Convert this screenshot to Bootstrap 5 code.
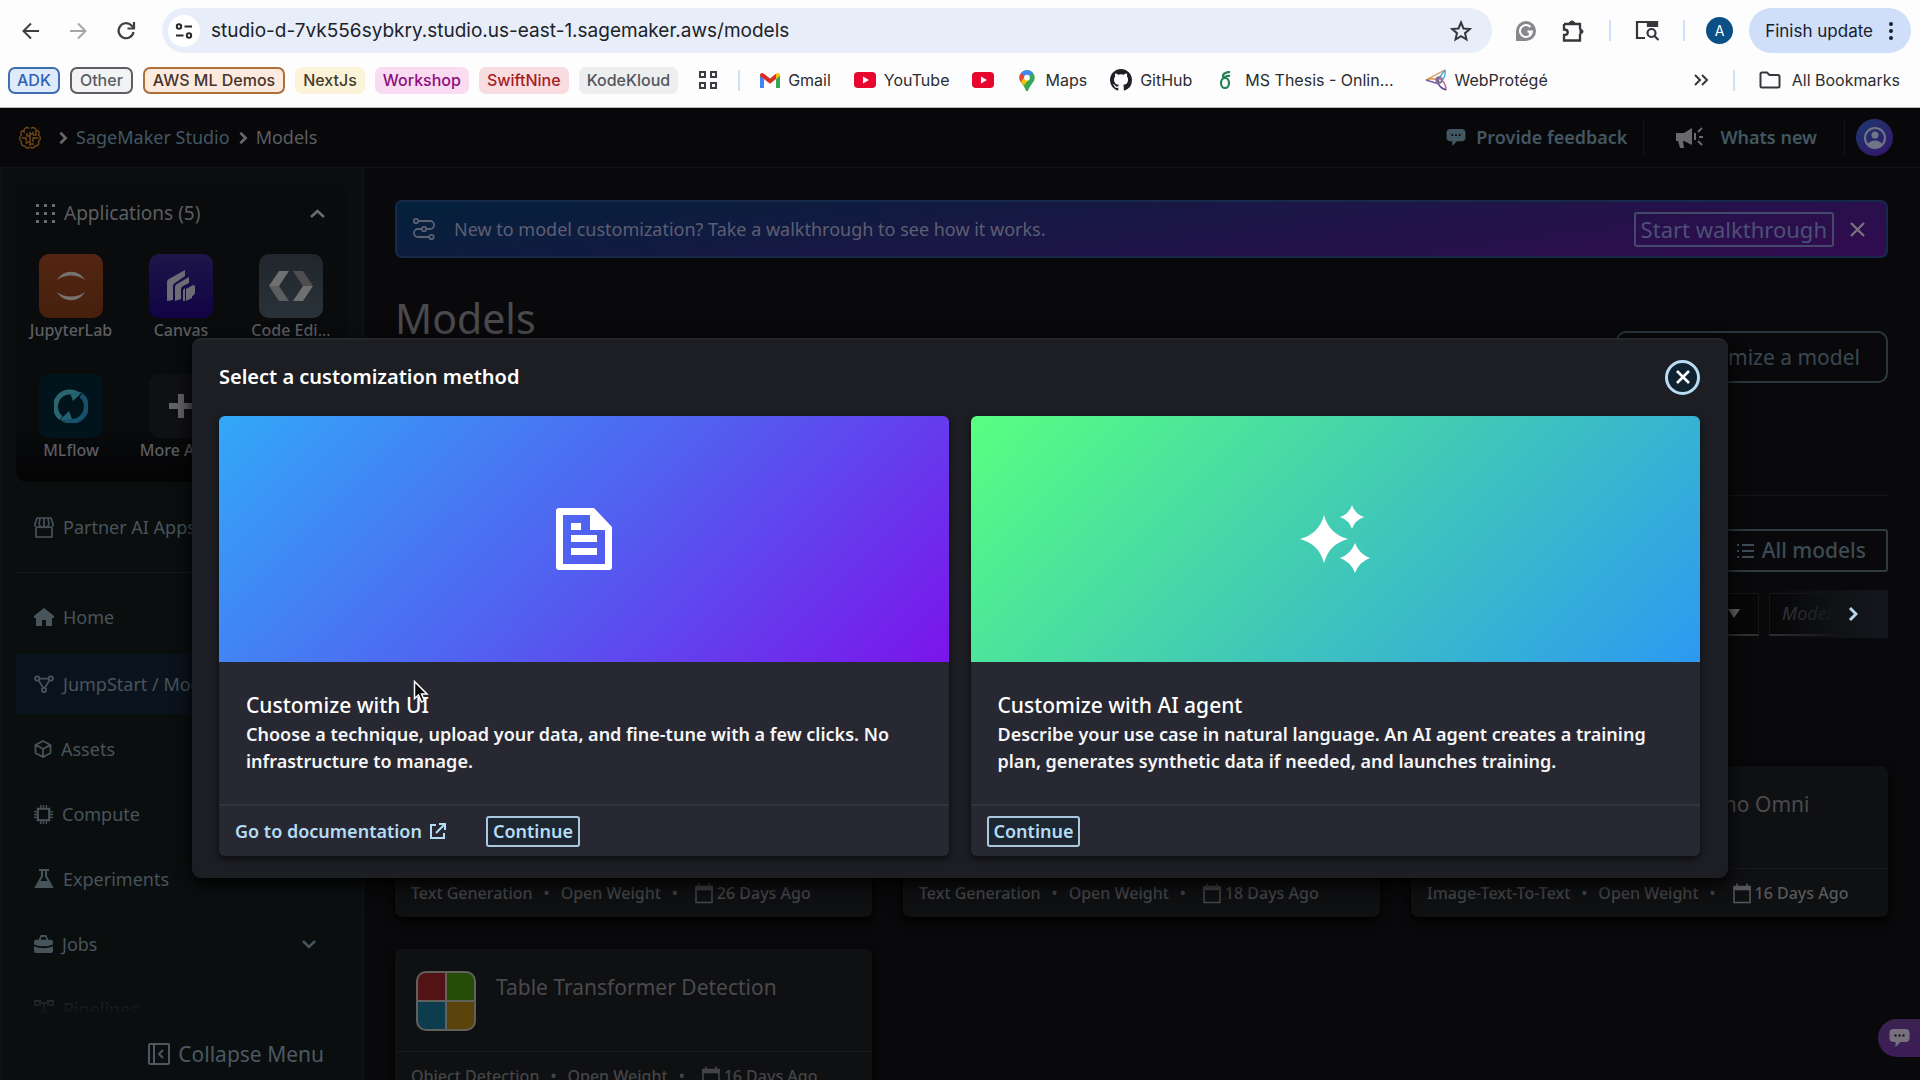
<!DOCTYPE html>
<html lang="en" data-bs-theme="dark">
<head>
<meta charset="utf-8">
<meta name="viewport" content="width=device-width, initial-scale=1">
<title>Models - SageMaker Studio</title>
<link href="https://cdn.jsdelivr.net/npm/bootstrap@5.3.0/dist/css/bootstrap.min.css" rel="stylesheet">
<style>
body{height:100vh;overflow:hidden;background:#09090b;color:#5c5d61;font-family:"Noto Sans",sans-serif;font-size:18px;line-height:27px;font-weight:400}
a{text-decoration:none;color:inherit}
svg{flex:none;display:block}
button{font-family:inherit}
.plain-btn{background:none;border:0;padding:0;color:inherit}

/* browser chrome */
.chrome{height:108px;background:#fdfdfe;color:#2b2d31;font-family:Inter,sans-serif;font-size:16px;line-height:22px;border-bottom:1px solid #b9bbbd}
.tool-row{height:61px;padding:0 9px 0 20px}
.nav-icons{gap:25px;margin-right:24px}
.omni{height:45px;border-radius:23px;background:#e8eef9;padding-left:6px;padding-right:20px}
.site-info{width:32px;height:32px;border-radius:50%;background:#fff}
.omni input{background:none;border:0;outline:0;font-size:19px;color:#202228;padding:0 0 0 11px}
.v-rule{width:2px;height:21px;background:#cfe0f8}
.acct{width:27px;height:27px;border-radius:50%;background:#0b4f87;color:#fff;font-size:14px}
.update-pill{height:45px;border-radius:23px;background:#cfdef9;color:#17202f;font-size:17px;padding:0 18px 0 16px;border:0}
.mark-row{height:38px;padding:0 20px 0 8px}
.mark-icon{margin:0 20px}
.chip{height:27px;border-radius:7px;padding:0 9px;font-weight:500;display:flex;align-items:center}
.chip-adk{background:#dfeafb;color:#2f61b4;border:2px solid #3f6fae;padding:0 7px}
.chip-other{background:#f1f3f4;color:#5b5e62;border:2px solid #5d5f62;padding:0 8px}
.chip-aws{background:#fbeadd;color:#47332a;border:2px solid #ad7038;padding:0 8px}
.chip-next{background:#fbf4d9;color:#443d2c;padding:0 8px}
.chip-work{background:#f9dcf2;color:#8e0d7d;padding:0 8px}
.chip-swift{background:#f9dcdf;color:#a51d26;padding:0 8px}
.chip-kode{background:#eceef0;color:#54575c;padding:0 8px}

/* application header */
.app-head{height:60px;border-bottom:1px solid #131417;background:#08080a;padding-left:18px;padding-right:27px}
.crumb-link{color:#425762}
.head-link{color:#425762;font-weight:600}
.head-rule{width:1px;height:38px;background:#131417}
.head-rule-end{margin:0 11px 0 27px}
.me{width:37px;height:37px;border-radius:50%;background:linear-gradient(145deg,#1e3a6e,#34146b)}

/* sidebar */
.side{width:364px;flex:none;background:#0b0e0f;border-right:1px solid #121517;border-left:2px solid #0f1314;padding:16px 15px 0 14px;color:#48545b}
.apps-card{height:298px;border-radius:10px;background:linear-gradient(#090b0d 80%,#040405);color:#5c5e61}
.apps-head{height:58px;padding:0 23px 0 20px}
.apps-head button{font-size:19px}
.tile-cell{width:110px;height:120px;font-size:16px;line-height:24px;text-align:center;font-weight:500}
.tile{width:64px;height:64px;border-radius:10px}
.t-jup{background:linear-gradient(#532513,#46200c)}
.t-can{background:linear-gradient(#1e1549,#110345)}
.t-code{background:linear-gradient(#20262b,#2a3239)}
.t-ml{background:#02141b}
.t-more{background:#0f1012}
.side-link{height:60px;padding-left:18px;gap:9px}
.side-link.active{background:#0a131d}
.side-line{height:1px;background:#17191b}
.fade-link{height:60px;opacity:.4;-webkit-mask-image:linear-gradient(#000 20px,transparent 36px);mask-image:linear-gradient(#000 20px,transparent 36px)}
.collapse-row{height:62px;padding:22px 24px 0 0;font-size:21px;line-height:28px;color:#4a5962;font-weight:500}

/* page */
.page{padding:32px 32px 0 31px;min-width:0}
.tour{height:58px;border:2px solid #16294a;border-radius:7px;background:linear-gradient(172deg,#03213a,#1b1646 50%,#320b50);padding:0 21px 0 15px;color:#5d5f72;font-size:18px}
.tour-btn{border:2px solid #45486b;border-radius:3px;background:none;color:#4b5274;font-size:22px;height:35px;line-height:30px;padding:0 5px}
.page-title{font-size:41px;line-height:52px;color:#4a4a4d;font-weight:400}
.cust-btn{width:272px;height:52px;border:2px solid #2b373d;border-radius:10px;background:none;color:#394850;font-size:21px;padding:0 26px}
.all-btn{height:43px;border:2px solid #2f3a40;border-radius:3px;background:none;color:#3c4b54;font-size:21px;font-weight:500;padding:0 20px}
.page-line{height:1px;background:#141517}
.filter{width:200px;height:43px;background:#070708;border:1px solid #151618;border-bottom:2px solid #2f3032;font-style:italic;color:#3d3d40;padding-left:12px;appearance:none}
.filter-end{width:119px;height:48px}
.filter-end .filter{width:119px}
.scroll-cover{inset:0;background:linear-gradient(90deg,rgba(16,17,21,0),#101216 60%,#14171d);padding-right:28px}
.model-grid{--bs-gutter-x:31px;--bs-gutter-y:32px}
.model-card{background:#0f1012;border-radius:7px;box-shadow:0 4px 10px #000}
.model-top{height:102px;padding:22px 21px 0 21px;gap:20px}
.model-top h2{font-size:21px;line-height:32px;color:#4a4a4d;font-weight:400;margin:0}
.logo-box{width:60px;height:60px;border-radius:10px;background:#5f5f5b}
.model-foot{height:49px;border-top:1px solid #191a1c;padding:0 16px;font-size:16px;font-weight:500;color:#454547;gap:11px}
.model-foot .newer{color:#58585b}
.model-foot .aged{gap:3px;margin-left:5px}

/* dialog */
.dlg{left:10%;right:10%;top:230px;background:#1d1e23;border-top:2px solid #26272d;border-radius:9px;padding:18px 28px 22px 27px;color:#f6f6f8;box-shadow:0 6px 18px #000;z-index:5}
.dlg-head{height:38px;margin-bottom:20px}
.dlg h1{font-size:20px;line-height:32px;font-weight:600;margin:0}
.dlg-close{width:35px;height:35px;border-radius:50%;border:3px solid #b8dcf3;background:#10222f;color:#fff;padding:0}
.way-row{gap:22px}
.way{flex:1 1 0;background:#272831;border-radius:6px;overflow:hidden;box-shadow:0 3px 6px #0b0c0f}
.way-art{height:246px}
.art-blue{background:linear-gradient(135deg,#32a8f8,#5161f0 50%,#7b14ea)}
.art-green{background:linear-gradient(135deg,#58ff80,#41cbb4 50%,#2c99f2)}
.way-text{height:142px;padding:27px 27px 0;font-weight:600}
.way-text h2{font-size:21px;line-height:32px;font-weight:500;margin:0}
.way-text p{margin:0}
.way-foot{height:52px;border-top:2px solid #33353d;padding:0 16px;gap:40px;color:#b3dcf5;font-weight:600}
.go-btn{height:31px;border:2px solid #a9c9de;border-radius:3px;background:#1d2631;color:#b3dcf5;font-weight:600;padding:0 5px;line-height:26px}
.pointer{left:413px;top:572px;z-index:6}
.chat-tab{right:0;bottom:23px;width:42px;height:38px;border-radius:19px 0 0 19px;background:linear-gradient(#3a2250,#3d1d58);border:0;padding:0 0 0 11px;color:#77707e}
</style>
<script src="https://cdn.jsdelivr.net/npm/bootstrap@5.3.0/dist/js/bootstrap.bundle.min.js"></script>
</head>
<body class="d-flex flex-column">

<svg width="0" height="0" class="position-absolute">
  <symbol id="i-cal" viewBox="0 0 20 20"><path d="M2 4h16v15H2z" fill="none" stroke="currentColor" stroke-width="1.500"/><path d="M2 3h16v3H2zM5 0v4M15 0v4" fill="currentColor" stroke="currentColor" stroke-width="1.500"/></symbol>
  <symbol id="i-chat" viewBox="0 0 20 18"><path d="M4 0h12a4 4 0 0 1 4 4v5a4 4 0 0 1-4 4h-5l-5 5v-5H4a4 4 0 0 1-4-4V4a4 4 0 0 1 4-4z" fill="currentColor"/><path d="M5 6.500h2M9 6.500h2M13 6.500h2" stroke="#0a0a0c" stroke-width="2"/></symbol>
  <symbol id="i-yt" viewBox="0 0 22 16"><rect width="22" height="16" rx="4" fill="#e6062e"/><path d="M9 4.500v7l6-3.500z" fill="#fff"/></symbol>
  <symbol id="i-next" viewBox="0 0 10 16"><path d="M2 2l6 6-6 6" fill="none" stroke="currentColor" stroke-width="3"/></symbol>
</svg>

<header class="chrome flex-shrink-0">
  <div class="tool-row d-flex align-items-center">
    <div class="nav-icons d-flex align-items-center">
      <button class="plain-btn" aria-label="Back"><svg width="22" height="22" viewBox="0 0 22 22" fill="none" stroke="#3c3f43" stroke-width="2"><path d="M19 11H4M11 3.500L3.500 11l7.500 7.500"/></svg></button>
      <button class="plain-btn" aria-label="Forward"><svg width="22" height="22" viewBox="0 0 22 22" fill="none" stroke="#a4a6a9" stroke-width="2"><path d="M3 11h15M11 3.500l7.500 7.500-7.500 7.500"/></svg></button>
      <button class="plain-btn" aria-label="Reload"><svg width="24" height="24" viewBox="0 0 24 24" fill="none" stroke="#3c3f43" stroke-width="2.200"><path d="M19.500 13a7.500 7.500 0 1 1-2-6.500L20 9"/><path d="M20 3v6.500h-6.500"/></svg></button>
    </div>
    <div class="omni d-flex align-items-center flex-grow-1">
      <span class="site-info d-flex align-items-center justify-content-center"><svg width="18" height="18" viewBox="0 0 18 18" fill="none" stroke="#26282c" stroke-width="2"><circle cx="4" cy="4.500" r="2.200"/><path d="M9.500 4.500H17M1 13.500h7.500"/><circle cx="14" cy="13.500" r="2.200"/></svg></span>
      <input class="flex-grow-1" type="text" aria-label="Address" value="studio-d-7vk556sybkry.studio.us-east-1.sagemaker.aws/models">
      <button class="plain-btn" aria-label="Bookmark this page"><svg width="22" height="22" viewBox="0 0 22 22" fill="none" stroke="#34373c" stroke-width="2"><path d="M11 2.500l2.500 6 6.300.5-4.800 4.200 1.500 6.300-5.500-3.400-5.500 3.400L7 13.200 2.200 9l6.300-.5z"/></svg></button>
    </div>
    <svg class="ms-4" width="20" height="20" viewBox="0 0 20 20"><path d="M10 0a10 10 0 1 1 0 20H0V10A10 10 0 0 1 10 0z" fill="#86888b"/><path d="M14.500 6A6 6 0 1 0 16 10.500h-4.500M13 13l3-2.500" fill="none" stroke="#fff" stroke-width="2"/></svg>
    <svg class="ms-4" width="25" height="24" viewBox="0 0 25 24" fill="none" stroke="#34373c" stroke-width="2.300"><path d="M4 5h16v5.500M20 15v6.500H4V16c5 0 5-5.500 0-5.500V5"/><path d="M9 5c0-4 6-4 6 0zM20 10c4 0 4 5 0 5z" fill="#34373c" stroke-width="1"/></svg>
    <span class="v-rule ms-4"></span>
    <svg class="ms-4" width="24" height="21" viewBox="0 0 24 21" fill="none" stroke="#34373c" stroke-width="2.200"><path d="M10 18H2V2h20v5"/><path d="M13 2h9v4h-9z" fill="#34373c"/><circle cx="16.500" cy="13" r="4"/><path d="M19.500 16l4 4"/></svg>
    <span class="v-rule ms-4"></span>
    <span class="acct mx-3 d-flex align-items-center justify-content-center" style="margin-left:21px!important">A</span>
    <button class="update-pill d-flex align-items-center gap-3">Finish update <svg width="4" height="18" viewBox="0 0 4 18" fill="#17202f"><circle cx="2" cy="2" r="2"/><circle cx="2" cy="9" r="2"/><circle cx="2" cy="16" r="2"/></svg></button>
  </div>
  <nav class="mark-row d-flex align-items-center" aria-label="Bookmarks">
    <div class="d-flex align-items-center" style="gap:10px">
      <a href="#" class="chip chip-adk">ADK</a><a href="#" class="chip chip-other">Other</a><a href="#" class="chip chip-aws">AWS ML Demos</a><a href="#" class="chip chip-next">NextJs</a><a href="#" class="chip chip-work">Workshop</a><a href="#" class="chip chip-swift">SwiftNine</a><a href="#" class="chip chip-kode">KodeKloud</a>
    </div>
    <svg class="mark-icon" width="20" height="20" viewBox="0 0 20 20" fill="none" stroke="#3a3d41" stroke-width="2"><path d="M2 2h5v5H2zM13 2h5v5h-5zM2 13h5v5H2zM13 13h5v5h-5z"/></svg>
    <span class="v-rule"></span>
    <div class="d-flex align-items-center" style="gap:23px;margin-left:20px">
      <a href="#" class="d-flex align-items-center gap-2"><svg width="20" height="15" viewBox="0 0 20 15"><path d="M0 2v13h4V6z" fill="#4285f4"/><path d="M20 2v13h-4V6z" fill="#34a853"/><path d="M0 2.500C0 0 2.500-.5 4 .8L10 5.500l6-4.700V6l-6 4.700L4 6 0 3z" fill="#d93025"/><path d="M16 .8c1.500-1.300 4-.8 4 1.700L16 6z" fill="#fbbc04"/></svg>Gmail</a>
      <a href="#" class="d-flex align-items-center gap-2"><svg width="22" height="16"><use href="#i-yt"/></svg>YouTube</a>
      <a href="#" aria-label="YouTube home"><svg width="22" height="16"><use href="#i-yt"/></svg></a>
      <a href="#" class="d-flex align-items-center gap-2"><svg width="20" height="21" viewBox="-1 0 18 22"><path d="M8 0a8 8 0 0 1 8 8c0 5-5 7-7 14H7C5 15 0 13 0 8a8 8 0 0 1 8-8z" fill="#34a853"/><path d="M0 8a8 8 0 0 1 2-5l4 3.500-4.500 6A9 9 0 0 1 0 8z" fill="#ea4335"/><path d="M2 3a8 8 0 0 1 12 0L8 10z" fill="#4285f4"/><path d="M1.500 12L6 7l4 3-5.500 6.500z" fill="#fbbc04"/><circle cx="8" cy="8" r="3" fill="#fff"/></svg>Maps</a>
      <a href="#" class="d-flex align-items-center gap-2"><svg width="22" height="22" viewBox="0 0 16 16"><path fill="#1d2024" d="M8 0C3.580 0 0 3.580 0 8c0 3.540 2.290 6.530 5.470 7.590.4.070.55-.17.55-.38v-1.490c-2.010.37-2.530-.49-2.690-.94-.09-.23-.48-.94-.82-1.130-.28-.15-.68-.52-.01-.53.63-.01 1.080.58 1.230.82.72 1.210 1.870.87 2.330.66.07-.52.28-.87.51-1.070-1.780-.2-3.640-.89-3.640-3.950 0-.87.31-1.590.82-2.150-.08-.2-.36-1.020.08-2.120 0 0 .67-.21 2.200.82a7.600 7.600 0 0 1 4 0c1.530-1.040 2.200-.82 2.200-.82.44 1.100.16 1.920.08 2.120.51.56.82 1.270.82 2.150 0 3.070-1.870 3.750-3.650 3.950.29.25.54.73.54 1.480v2.200c0 .21.150.46.550.38A8 8 0 0 0 16 8c0-4.420-3.580-8-8-8z"/></svg>GitHub</a>
      <a href="#" class="d-flex align-items-center gap-2"><svg width="22" height="18" viewBox="0 0 20 18" fill="none" stroke="#238055" stroke-width="2.200"><path d="M14 1c-5 0-9 3-6 6"/><ellipse cx="9" cy="12" rx="4" ry="5"/><path d="M7 7c2-1 4-3 7-2"/></svg>MS Thesis - Onlin...</a>
      <a href="#" class="d-flex align-items-center gap-2 ms-2"><svg width="22" height="22" viewBox="0 0 22 22" fill="none" stroke-width="1.400"><path d="M1 11L20 1" stroke="#d6914e"/><path d="M1 11c5-2 10-2 14 2" stroke="#d6914e"/><path d="M1 11l13 4" stroke="#7d5aa5"/><path d="M20 1c1 5-1 9-5 13" stroke="#4ba9cf"/><path d="M20 1l-6 8" stroke="#4ba9cf"/><path d="M21 21c0-6-3-10-8-12" stroke="#c96688"/><path d="M21 21c-6-2-9-6-8-12" stroke="#5b4a98"/><circle cx="14" cy="11" r="3" stroke="#7b6f99"/></svg>WebProtégé</a>
    </div>
    <button class="plain-btn ms-auto" aria-label="More bookmarks"><svg width="16" height="14" viewBox="0 0 16 14" fill="none" stroke="#34373c" stroke-width="2"><path d="M2 2l5 5-5 5M9 2l5 5-5 5"/></svg></button>
    <span class="v-rule mx-4"></span>
    <a href="#" class="d-flex align-items-center" style="gap:11px"><svg width="22" height="18" viewBox="0 0 22 18" fill="none" stroke="#34373c" stroke-width="2"><path d="M1.500 15V3q0-1.500 1.500-1.500h5L10.500 4H19q1.500 0 1.500 1.500V15q0 1.500-1.500 1.500H3Q1.500 16.500 1.500 15z"/></svg>All Bookmarks</a>
  </nav>
</header>

<div class="d-flex flex-column flex-grow-1 position-relative overflow-hidden">
  <header class="app-head d-flex align-items-center flex-shrink-0">
    <svg width="24" height="24" viewBox="0 0 24 24" fill="none" stroke="#704716" stroke-width="1.400"><path d="M11 2.500C9 .5 6 2 6 4.500 3 4.500 2 7 3.500 9 1 10.500 1 14 3.500 15.500 2.500 18.500 5 20.500 7 20c1 2.500 3.500 2.500 4.500 1M13 2.500c2-2 5-.5 5 2 3 0 4 2.500 2.500 4.500 2.500 1.500 2.500 5 0 6.500 1 3-1.500 5-3.500 4.500-1 2.500-3.500 2.500-4.500 1M12 6v14M12 10H9V7M6 4.500V7M3.500 12H8v3M12 16H8.500v2M12 8h3V5.500M18 4.500V9h-3M20.500 12H15v4M12 18h4"/></svg>
    <svg class="ms-3" width="10" height="14" color="#68696c"><use href="#i-next"/></svg>
    <a href="#" class="crumb-link ms-2">SageMaker Studio</a>
    <svg class="ms-2" width="10" height="14" color="#68696c"><use href="#i-next"/></svg>
    <span class="ms-2">Models</span>
    <a href="#" class="head-link ms-auto d-flex align-items-center" style="gap:10px"><svg width="20" height="17"><use href="#i-chat"/></svg>Provide feedback</a>
    <span class="head-rule mx-3"></span>
    <a href="#" class="head-link ms-3 d-flex align-items-center gap-3"><svg width="28" height="22" viewBox="0 0 28 22" fill="#68696c"><path d="M0 6h8l8-5v17l-8-4H7l1 7H4L2 14H0z"/><path d="M19 6v7M22 5l4-4M23 10h4M22 14l4 4" stroke="#68696c" stroke-width="2"/></svg>Whats new</a>
    <span class="head-rule head-rule-end"></span>
    <button class="me plain-btn d-flex align-items-center justify-content-center" aria-label="Account"><svg width="22" height="22" viewBox="0 0 22 22"><circle cx="11" cy="11" r="10" fill="none" stroke="#707685" stroke-width="2"/><circle cx="11" cy="8" r="3.500" fill="#707685"/><path d="M3.500 18c2-6 13-6 15 0-4 4-11 4-15 0z" fill="#707685"/></svg></button>
  </header>

  <div class="d-flex flex-grow-1 overflow-hidden">
    <aside class="side d-flex flex-column">
      <section class="apps-card flex-shrink-0">
        <div class="apps-head d-flex align-items-center">
          <svg width="19" height="19" viewBox="0 0 19 19" fill="#6a6c6f"><path d="M0 0h3v3H0zM8 0h3v3H8zM16 0h3v3h-3zM0 8h3v3H0zM8 8h3v3H8zM16 8h3v3h-3zM0 16h3v3H0zM8 16h3v3H8zM16 16h3v3h-3z"/></svg>
          <button class="plain-btn d-flex align-items-center flex-grow-1" style="margin-left:9px" aria-expanded="true">Applications (5)
            <svg class="ms-auto" width="15" height="9" viewBox="0 0 15 9" fill="none" stroke="#6a6c6f" stroke-width="2.500"><path d="M1 8l6.500-6L14 8"/></svg></button>
        </div>
        <div class="d-flex flex-wrap" style="padding-top:12px">
          <a href="#" class="tile-cell"><span class="tile t-jup mx-auto d-flex align-items-center justify-content-center"><svg width="30" height="30" viewBox="0 0 30 30" fill="#77716f"><path d="M1 9C7-2 23-2 29 9 21 3 9 3 1 9zM1 21c6 11 22 11 28 0-8 6-20 6-28 0z"/></svg></span>JupyterLab</a>
          <a href="#" class="tile-cell"><span class="tile t-can mx-auto d-flex align-items-center justify-content-center"><svg width="28" height="32" viewBox="0 0 28 32" fill="#6c6c76"><path d="M0 12Q0 10 2 9L18 0v6L8 13q-2 1-2 3v14l-6 1zM8 17q0-2 2-3l12-7v6l-6 3q-2 1-2 3v10l-6 2zM16 21q0-2 2-3v13h-2zM19 19l7-4q2 0 2 2v5q0 3-3 4v2l-6 3z"/></svg></span>Canvas</a>
          <a href="#" class="tile-cell"><span class="tile t-code mx-auto d-flex align-items-center justify-content-center"><svg width="44" height="32" viewBox="0 0 44 32"><path d="M10 1h10L10 16H0zM34 31H24l10-15h10z" fill="#6e7072"/><path d="M0 16h10l10 15H10z" fill="#5b5d5f"/><path d="M24 1h10l10 15H34z" fill="#504d50"/></svg></span>Code Edi...</a>
          <a href="#" class="tile-cell"><span class="tile t-ml mx-auto d-flex align-items-center justify-content-center"><svg width="34" height="34" viewBox="0 0 34 34" fill="none" stroke-width="5"><path d="M7 29A14 14 0 0 1 25 6" stroke="#2b6670"/><path d="M27 6a14 14 0 0 1-19 23" stroke="#17506a"/><path d="M19 12l9-9-12 1zM15 22l-9 9 12-1z" fill="#246273" stroke="none"/></svg></span>MLflow</a>
          <a href="#" class="tile-cell"><span class="tile t-more mx-auto d-flex align-items-center justify-content-center"><svg width="24" height="24" viewBox="0 0 24 24" stroke="#636467" stroke-width="6"><path d="M12 0v24M0 12h24"/></svg></span>More Apps</a>
        </div>
      </section>
      <nav class="d-flex flex-column flex-grow-1" style="min-height:0" aria-label="Studio">
        <a href="#" class="side-link d-flex align-items-center flex-shrink-0" style="margin-top:15px"><svg width="20" height="21" viewBox="0 0 20 21" fill="none" stroke="currentColor" stroke-width="1.600"><path d="M3 1h14l2 6v2q-3 3-5 0-2 3-4 0-2 3-4 0-2 3-5 0V7zM6 1L5 8M10 1v8M14 1l1 7M2 11v9h16v-9"/></svg>Partner AI Apps</a>
        <div class="side-line flex-shrink-0" style="margin:15px 0 14px"></div>
        <a href="#" class="side-link d-flex align-items-center flex-shrink-0"><svg width="20" height="18" viewBox="0 0 20 18" fill="currentColor"><path d="M10 0l10 8v2h-2v8h-6v-6H8v6H2v-8H0V8z"/></svg>Home</a>
        <a href="#" class="side-link active d-flex align-items-center flex-shrink-0" style="margin:7px 0 5px"><svg width="20" height="20" viewBox="0 0 22 20" fill="none" stroke="currentColor" stroke-width="2"><circle cx="3.500" cy="4" r="2.300"/><circle cx="18.500" cy="4" r="2.300"/><circle cx="11" cy="16.500" r="2.300"/><path d="M6 4h10M5 6l5 8M17 6l-5 8"/></svg>JumpStart / Models</a>
        <a href="#" class="side-link d-flex align-items-center flex-shrink-0"><svg width="18" height="18" viewBox="0 0 18 18" fill="none" stroke="currentColor" stroke-width="1.800"><path d="M9 1l7.500 4v8L9 17l-7.500-4V5zM2 5l7 4 7-4M9 9v8"/></svg>Assets</a>
        <a href="#" class="side-link d-flex align-items-center flex-shrink-0" style="margin-top:5px"><svg width="19" height="19" viewBox="0 0 20 20" fill="none" stroke="currentColor"><path d="M4 4h12v12H4z" stroke-width="2.200"/><path d="M7 0v3M10 0v3M13 0v3M7 17v3M10 17v3M13 17v3M0 7h3M0 10h3M0 13h3M17 7h3M17 10h3M17 13h3" stroke-width="1.500"/></svg>Compute</a>
        <a href="#" class="side-link d-flex align-items-center flex-shrink-0" style="margin-top:5px"><svg width="20" height="20" viewBox="0 0 20 20"><path d="M5 1h10M8 1v6L2 18h16L12 7V1" fill="none" stroke="currentColor" stroke-width="2"/><path d="M6 12h8l4 7H2z" fill="currentColor"/></svg>Experiments</a>
        <a href="#" class="side-link d-flex align-items-center flex-shrink-0" style="margin-top:5px"><svg width="19" height="18" viewBox="0 0 20 19" fill="currentColor"><path d="M5 5l2-5h6l2 5h3q2 0 2 2v3q-10 4-20 0V7q0-2 2-2zM7 5h6l-1-3H8zM0 12q10 4 20 0v5q0 2-2 2H2q-2 0-2-2z" fill-rule="evenodd"/></svg>Jobs<svg class="ms-auto" style="margin-right:32px" width="14" height="9" viewBox="0 0 14 9" fill="none" stroke="currentColor" stroke-width="2.500"><path d="M1 1l6 6 6-6"/></svg></a>
        <a href="#" class="side-link fade-link d-flex align-items-center flex-shrink-0" style="margin-top:5px"><svg width="20" height="18" viewBox="0 0 20 18" fill="none" stroke="currentColor" stroke-width="2"><path d="M1 1h5v4H1zM14 1h5v4h-5zM8 12h5v4H8zM6 3h8M10 3v9"/></svg>Pipelines</a>
      </nav>
      <div class="collapse-row flex-shrink-0 d-flex justify-content-end"><button class="plain-btn d-flex align-items-center gap-2" style="height:28px"><svg width="22" height="22" viewBox="0 0 22 22" fill="none" stroke="currentColor" stroke-width="2"><rect x="1" y="1" width="20" height="20" rx="1"/><path d="M6 1v20M15 7l-4 4 4 4"/></svg>Collapse Menu</button></div>
    </aside>

    <main class="page flex-grow-1">
      <div class="tour d-flex align-items-center">
        <svg width="24" height="24" viewBox="0 0 24 24" fill="none" stroke="currentColor" stroke-width="1.800"><circle cx="4" cy="4" r="2.200"/><path d="M6 4h12a4 4 0 0 1 0 8h-4M10 12H6a4 4 0 0 0 0 8h11"/><circle cx="12" cy="12" r="2.200"/><circle cx="19.500" cy="20" r="2.200"/></svg>
        <span style="margin-left:18px">New to model customization? Take a walkthrough to see how it works.</span>
        <button class="tour-btn ms-auto">Start walkthrough</button>
        <button class="plain-btn ms-3" aria-label="Dismiss"><svg width="15" height="15" viewBox="0 0 15 15" stroke="#77727c" stroke-width="2.400"><path d="M1 1l13 13M14 1L1 14"/></svg></button>
      </div>
      <div class="d-flex align-items-start justify-content-between" style="margin-top:34px;height:92px">
        <h1 class="page-title m-0">Models</h1>
        <button class="cust-btn text-end text-nowrap" style="margin-top:39px">Customize a model</button>
      </div>
      <div class="page-line" style="margin-top:111px"></div>
      <div class="d-flex justify-content-end" style="margin-top:33px"><button class="all-btn d-flex align-items-center gap-2"><svg width="17" height="14" viewBox="0 0 17 14" stroke="currentColor" stroke-width="2"><path d="M0 1h2M0 7h2M0 13h2M5 1h12M5 7h12M5 13h12"/></svg>All models</button></div>
      <div class="d-flex justify-content-end align-items-center" style="margin-top:18px;gap:10px">
        <div class="position-relative"><select class="filter" aria-label="Provider"><option></option></select><svg class="position-absolute end-0 top-50 translate-middle-y me-3" width="18" height="10" viewBox="0 0 18 10" fill="#626264"><path d="M3 0h12L9 9z"/></svg></div>
        <div class="filter-end position-relative d-flex align-items-center"><select class="filter" aria-label="Model type"><option>Model...</option></select>
          <div class="scroll-cover position-absolute d-flex align-items-center justify-content-end"><button class="plain-btn" aria-label="Scroll filters right"><svg width="14" height="16" viewBox="0 0 10 16" color="#b7d8ea"><use href="#i-next"/></svg></button></div></div>
      </div>
      <div class="row row-cols-3 model-grid" style="margin-top:96px">
        <div class="col"><article class="model-card"><div class="model-top"></div><div class="model-foot d-flex align-items-center"><span>Text Generation</span><span>•</span><span>Open Weight</span><span>•</span><span class="aged d-flex align-items-center"><svg width="20" height="21"><use href="#i-cal"/></svg>26 Days Ago</span></div></article></div>
        <div class="col"><article class="model-card"><div class="model-top"></div><div class="model-foot d-flex align-items-center"><span>Text Generation</span><span>•</span><span>Open Weight</span><span>•</span><span class="aged d-flex align-items-center"><svg width="20" height="21"><use href="#i-cal"/></svg>18 Days Ago</span></div></article></div>
        <div class="col"><article class="model-card"><div class="model-top d-flex"><span class="logo-box"></span><h2>NVIDIA Nemotron Nano Omni</h2></div><div class="model-foot d-flex align-items-center"><span>Image-Text-To-Text</span><span>•</span><span>Open Weight</span><span>•</span><span class="aged newer d-flex align-items-center"><svg width="20" height="21"><use href="#i-cal"/></svg>16 Days Ago</span></div></article></div>
        <div class="col"><article class="model-card"><div class="model-top d-flex"><svg width="60" height="60" viewBox="0 0 60 60"><clipPath id="ms"><rect x="2" y="2" width="56" height="56" rx="8"/></clipPath><rect width="60" height="60" rx="10" fill="#61615c"/><g clip-path="url(#ms)"><path d="M0 0h29v29H0z" fill="#511313"/><path d="M31 0h29v29H31z" fill="#254d08"/><path d="M0 31h29v29H0z" fill="#0d3c4e"/><path d="M31 31h29v29H31z" fill="#5b440c"/></g></svg><h2>Table Transformer Detection</h2></div><div class="model-foot d-flex align-items-center"><span>Object Detection</span><span>•</span><span>Open Weight</span><span>•</span><span class="aged d-flex align-items-center"><svg width="20" height="21"><use href="#i-cal"/></svg>16 Days Ago</span></div></article></div>
      </div>
    </main>
  </div>

  <section class="dlg position-absolute" role="dialog" aria-labelledby="dlg-title">
    <div class="dlg-head d-flex align-items-center justify-content-between">
      <h1 id="dlg-title">Select a customization method</h1>
      <button class="dlg-close d-flex align-items-center justify-content-center" aria-label="Close"><svg width="14" height="14" viewBox="0 0 14 14" stroke="#fff" stroke-width="2.600"><path d="M1 1l12 12M13 1L1 13"/></svg></button>
    </div>
    <div class="way-row d-flex">
      <article class="way">
        <div class="way-art art-blue d-flex align-items-center justify-content-center"><svg width="58" height="64" viewBox="0 0 58 64"><path d="M4 1h35l18 19v40q0 3-3 3H4q-3 0-3-3V4q0-3 3-3zM8 8v49h42V23H35V8z" fill="#fff" fill-rule="evenodd"/><path d="M16 16h10v7H16zM16 28h26v7H16zM16 41h26v7H16z" fill="#fff"/></svg></div>
        <div class="way-text"><h2>Customize with UI</h2><p>Choose a technique, upload your data, and fine-tune with a few clicks. No infrastructure to manage.</p></div>
        <div class="way-foot d-flex align-items-center"><a href="#" class="d-flex align-items-center gap-2">Go to documentation <svg width="16" height="16" viewBox="0 0 16 16" fill="none" stroke="currentColor" stroke-width="2"><path d="M6 2H1v13h13v-5M9 1h6v6M15 1L6 10"/></svg></a><button class="go-btn">Continue</button></div>
      </article>
      <article class="way">
        <div class="way-art art-green d-flex align-items-center justify-content-center"><svg width="70" height="68" viewBox="0 0 70 68" fill="#fff"><path d="M24 10q5 19 24 24-19 5-24 24Q19 39 0 34q19-5 24-24zM52 0q3 9 12 12-9 3-12 12-3-9-12-12 9-3 12-12zM55 38q4 11 15 15-11 4-15 15-4-11-15-15 11-4 15-15z"/></svg></div>
        <div class="way-text"><h2>Customize with AI agent</h2><p>Describe your use case in natural language. An AI agent creates a training plan, generates synthetic data if needed, and launches training.</p></div>
        <div class="way-foot d-flex align-items-center"><button class="go-btn">Continue</button></div>
      </article>
    </div>
  </section>

  <svg class="pointer position-absolute" width="16" height="24" viewBox="0 0 16 24"><path d="M1.500 1.500v17l4-3.500 3 7 3-1.300-3-6.700h5.500z" fill="#09090b" stroke="#fff" stroke-width="1.500"/></svg>
  <button class="chat-tab position-absolute" aria-label="Open chat"><svg width="21" height="18"><use href="#i-chat"/></svg></button>
</div>
</body>
</html>
